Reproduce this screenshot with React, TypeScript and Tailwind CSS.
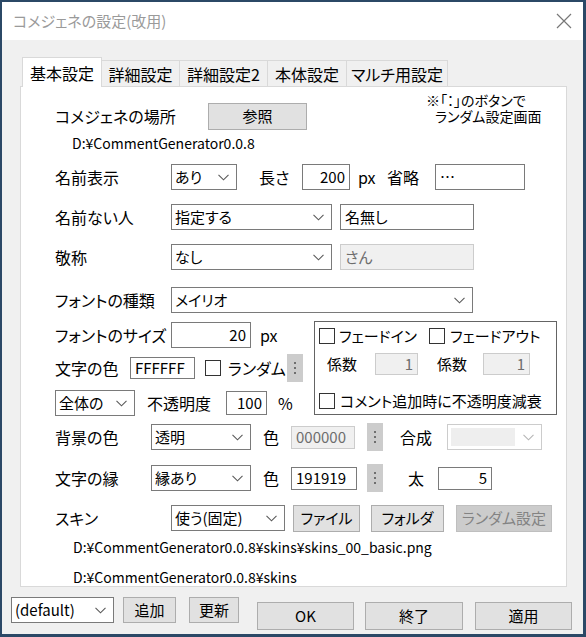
import React from "react";

const Chevron = ({ color = "#5a5a5a" }: { color?: string }) => (
	<svg width="11" height="7" viewBox="0 0 11 7" className="shrink-0">
		<path d="M0.5 0.8 L5.5 5.8 L10.5 0.8" fill="none" stroke={color} strokeWidth="1.1" />
	</svg>
);

const Combo = ({ text, className = "" }: { text: string; className?: string }) => (
	<div
		className={`flex h-[26px] shrink-0 items-center justify-between border border-[#7a7a7a] bg-white pl-[3px] pr-[7px] text-[15px] ${className}`}
	>
		<span>{text}</span>
		<Chevron />
	</div>
);

const Field = ({ text, className = "" }: { text: string; className?: string }) => (
	<div className={`flex shrink-0 items-center border border-[#7a7a7a] bg-white px-[4px] text-[15px] ${className}`}>
		{text}
	</div>
);

const DisabledField = ({ text, className = "" }: { text: string; className?: string }) => (
	<div
		className={`flex shrink-0 items-center border border-[#cccccc] bg-[#f0f0f0] px-[4px] text-[15px] text-[#6d6d6d] ${className}`}
	>
		{text}
	</div>
);

const Button = ({ text, className = "" }: { text: string; className?: string }) => (
	<button
		type="button"
		className={`flex shrink-0 items-center justify-center border border-[#adadad] bg-[#e1e1e1] text-[15px] ${className}`}
	>
		{text}
	</button>
);

const Dots = ({ className = "" }: { className?: string }) => (
	<div className={`flex h-[28px] w-[16px] shrink-0 flex-col items-center justify-center gap-[3px] bg-[#cccccc] ${className}`}>
		<span className="h-[2px] w-[2px] bg-[#6f6f6f]" />
		<span className="h-[2px] w-[2px] bg-[#6f6f6f]" />
		<span className="h-[2px] w-[2px] bg-[#6f6f6f]" />
	</div>
);

const Check = ({ className = "" }: { className?: string }) => (
	<span className={`block h-[16px] w-[16px] shrink-0 border border-[#333333] bg-white ${className}`} />
);

const App = () => (
	<div className="flex h-[637px] w-[586px] flex-col border-2 border-r-[3px] border-b-[3px] border-[#2b4866] bg-[#f0f0f0] text-black [font-family:'Noto_Sans_CJK_JP',sans-serif] [font-feature-settings:'palt']">
		{/* title bar */}
		<div className="flex h-[38px] shrink-0 items-center justify-between bg-white pl-[11px] pr-[11px]">
			<span className="text-[15px] text-[#9a9a9a]">コメジェネの設定(改用)</span>
			<svg width="16" height="16" viewBox="0 0 16 16">
				<path d="M1 1 L15 15 M15 1 L1 15" stroke="#777" strokeWidth="1.2" />
			</svg>
		</div>

		<div className="flex flex-col pl-[18px] pt-[17px]">
			{/* tabs */}
			<div className="flex h-[29px] items-end pl-[2px] text-[16px]">
				<div className="relative z-10 -mb-px flex h-[30px] w-[80px] items-center justify-center border border-b-0 border-[#d9d9d9] bg-white">
					基本設定
				</div>
				<div className="-ml-px flex h-[26px] w-[79px] items-center justify-center border border-b-0 border-[#d9d9d9] bg-[#f0f0f0]">
					詳細設定
				</div>
				<div className="-ml-px flex h-[26px] w-[89px] items-center justify-center border border-b-0 border-[#d9d9d9] bg-[#f0f0f0]">
					詳細設定2
				</div>
				<div className="-ml-px flex h-[26px] w-[80px] items-center justify-center border border-b-0 border-[#d9d9d9] bg-[#f0f0f0]">
					本体設定
				</div>
				<div className="-ml-px flex h-[26px] w-[102px] items-center justify-center border border-b-0 border-[#d9d9d9] bg-[#f0f0f0]">
					マルチ用設定
				</div>
			</div>

			{/* pane */}
			<div className="flex h-[501px] w-[547px] flex-col border border-[#d9d9d9] bg-white pl-[34px] pt-[5px] text-[16px]">
				<div className="flex items-start">
					<span className="mt-[11px] flex h-[26px] w-[153px] shrink-0 items-center">コメジェネの場所</span>
					<Button text="参照" className="mt-[11px] h-[27px] w-[99px]" />
					<div className="ml-[119px] flex flex-col text-[14px] leading-[16px]">
						<span>※「：」のボタンで</span>
						<span className="ml-[9px]">ランダム設定画面</span>
					</div>
				</div>

				<div className="mt-[3px] flex h-[20px] items-center pl-[17px] text-[14px]">D:¥CommentGenerator0.0.8</div>

				<div className="mt-[11px] flex h-[26px] items-center">
					<span className="w-[116px] shrink-0">名前表示</span>
					<Combo text="あり" className="w-[66px]" />
					<span className="ml-[22px] w-[43px] shrink-0">長さ</span>
					<Field text="200" className="h-[26px] w-[48px] justify-end" />
					<span className="ml-[8px] w-[29px] shrink-0">px</span>
					<span className="w-[48px] shrink-0">省略</span>
					<Field text="…" className="h-[26px] w-[90px]" />
				</div>

				<div className="mt-[14px] flex h-[26px] items-center">
					<span className="w-[116px] shrink-0">名前ない人</span>
					<Combo text="指定する" className="w-[161px]" />
					<Field text="名無し" className="ml-[8px] h-[26px] w-[134px]" />
				</div>

				<div className="mt-[14px] flex h-[26px] items-center">
					<span className="w-[116px] shrink-0">敬称</span>
					<Combo text="なし" className="w-[161px]" />
					<DisabledField text="さん" className="ml-[8px] h-[26px] w-[134px]" />
				</div>

				<div className="mt-[17px] flex h-[26px] items-center">
					<span className="w-[116px] shrink-0">フォントの種類</span>
					<Combo text="メイリオ" className="w-[302px]" />
				</div>

				<div className="mt-[8px] flex">
					<div className="flex w-[259px] shrink-0 flex-col">
						<div className="mt-[1px] flex h-[26px] items-center">
							<span className="w-[116px] shrink-0">フォントのサイズ</span>
							<Field text="20" className="h-[26px] w-[80px] justify-end" />
							<span className="ml-[9px]">px</span>
						</div>
						<div className="mt-[7px] flex h-[26px] items-center">
							<span className="w-[75px] shrink-0">文字の色</span>
							<Field text="FFFFFF" className="h-[22px] w-[65px]" />
							<Check className="ml-[10px]" />
							<span className="ml-[7px] w-[59px] shrink-0">ランダム</span>
							<Dots />
						</div>
						<div className="mt-[9px] flex h-[26px] items-center">
							<Combo text="全体の" className="w-[80px]" />
							<span className="ml-[12px] w-[79px] shrink-0">不透明度</span>
							<Field text="100" className="h-[24px] w-[41px] justify-end" />
							<span className="ml-[11px]">%</span>
						</div>
					</div>

					<div className="flex h-[94px] w-[243px] flex-col border border-[#646464] pl-[4px] text-[15px]">
						<div className="mt-[5px] flex h-[18px] items-center">
							<div className="flex w-[110px] shrink-0 items-center">
								<Check />
								<span className="ml-[4px]">フェードイン</span>
							</div>
							<Check />
							<span className="ml-[5px]">フェードアウト</span>
						</div>
						<div className="mt-[8px] flex h-[22px] items-center">
							<span className="ml-[8px] w-[48px] shrink-0">係数</span>
							<DisabledField text="1" className="h-[22px] w-[43px] justify-end" />
							<span className="ml-[19px] w-[46px] shrink-0">係数</span>
							<DisabledField text="1" className="h-[22px] w-[47px] justify-end" />
						</div>
						<div className="mt-[17px] flex h-[18px] items-center">
							<Check />
							<span className="ml-[5px]">コメント追加時に不透明度減衰</span>
						</div>
					</div>
				</div>

				<div className="mt-[8px] flex h-[26px] items-center">
					<span className="w-[96px] shrink-0">背景の色</span>
					<Combo text="透明" className="w-[100px]" />
					<span className="ml-[12px] w-[28px] shrink-0">色</span>
					<DisabledField text="000000" className="h-[23px] w-[64px]" />
					<Dots className="ml-[12px]" />
					<span className="ml-[17px] w-[47px] shrink-0">合成</span>
					<div className="flex h-[26px] w-[95px] shrink-0 items-center justify-between border border-[#cccccc] bg-white pl-[3px] pr-[7px]">
						<span className="h-[18px] w-[64px] bg-[#eeeeee]" />
						<Chevron color="#b5b5b5" />
					</div>
				</div>

				<div className="mt-[15px] flex h-[26px] items-center">
					<span className="w-[96px] shrink-0">文字の縁</span>
					<Combo text="縁あり" className="w-[100px]" />
					<span className="ml-[12px] w-[28px] shrink-0">色</span>
					<Field text="191919" className="h-[23px] w-[66px]" />
					<Dots className="ml-[10px]" />
					<span className="ml-[25px] w-[30px] shrink-0">太</span>
					<Field text="5" className="h-[23px] w-[54px] justify-end" />
				</div>

				<div className="mt-[14px] flex h-[26px] items-center">
					<span className="w-[116px] shrink-0">スキン</span>
					<Combo text="使う(固定)" className="w-[114px]" />
					<Button text="ファイル" className="ml-[8px] h-[27px] w-[67px]" />
					<Button text="フォルダ" className="ml-[11px] h-[27px] w-[73px]" />
					<button
						type="button"
						className="ml-[12px] flex h-[27px] w-[96px] shrink-0 items-center justify-center border border-[#bfbfbf] bg-[#cccccc] text-[15px] text-[#838383]"
					>
						ランダム設定
					</button>
				</div>

				<div className="mt-[6px] flex h-[20px] items-center pl-[18px] text-[14px]">
					D:¥CommentGenerator0.0.8¥skins¥skins_00_basic.png
				</div>
				<div className="mt-[10px] flex h-[20px] items-center pl-[18px] text-[14px]">D:¥CommentGenerator0.0.8¥skins</div>
			</div>
		</div>

		{/* bottom buttons */}
		<div className="flex items-start pl-[9px] pt-[10px]">
			<Combo text="(default)" className="w-[103px]" />
			<Button text="追加" className="ml-[9px] h-[26px] w-[53px]" />
			<Button text="更新" className="ml-[13px] h-[26px] w-[50px]" />
			<Button text="OK" className="ml-[18px] mt-[5px] h-[28px] w-[97px]" />
			<Button text="終了" className="ml-[11px] mt-[5px] h-[28px] w-[98px]" />
			<Button text="適用" className="ml-[12px] mt-[5px] h-[28px] w-[97px]" />
		</div>
	</div>
);

export default App;
